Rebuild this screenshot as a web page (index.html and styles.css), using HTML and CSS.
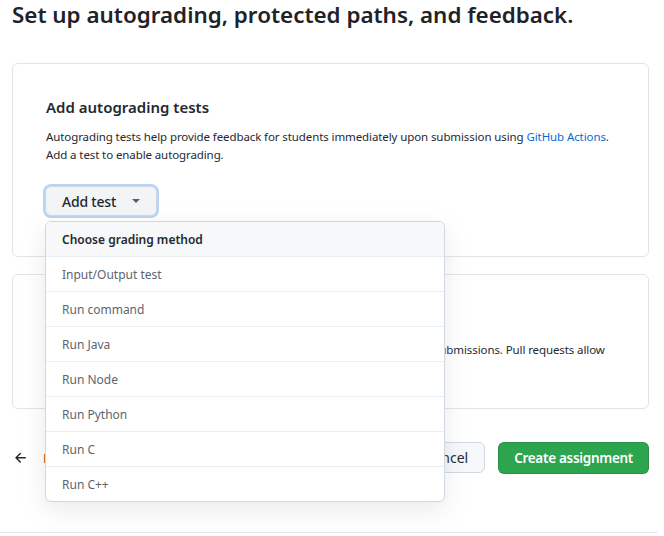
FILE: index.html
```html
<!DOCTYPE html>
<html lang="en">
<head>
<meta charset="utf-8">
<title>Autograding</title>
<link rel="stylesheet" href="styles.css">
</head>
<body>
<main class="page">
  <h1 class="page-title">Set up autograding, protected paths, and feedback.</h1>

  <section class="card">
    <h2 class="card-title">Add autograding tests</h2>
    <p class="card-desc">Autograding tests help provide feedback for students immediately upon submission using <a href="#" class="link">GitHub Actions</a>.<br>Add a test to enable autograding.</p>
    <div class="dropdown">
      <button class="btn-add" type="button">Add test <span class="caret"></span></button>
      <div class="menu">
        <div class="menu-header">Choose grading method</div>
        <div class="menu-item">Input/Output test</div>
        <div class="menu-item">Run command</div>
        <div class="menu-item">Run Java</div>
        <div class="menu-item">Run Node</div>
        <div class="menu-item">Run Python</div>
        <div class="menu-item">Run C</div>
        <div class="menu-item">Run C++</div>
      </div>
    </div>
  </section>

  <section class="card card-second">
    <h2 class="card-title">Protected file paths</h2>
    <p class="card-desc">Protect files from being modified by students in all their own assignment submissions. Pull requests allow<br>you to view changes.</p>
  </section>

  <footer class="actions">
    <a href="#" class="back">
      <svg class="back-icon" viewBox="0 0 16 16" width="16" height="16"><path d="M7.78 12.53a.75.75 0 0 1-1.06 0L2.470 8.28a.75.75 0 0 1 0-1.06l4.25-4.25a.751.751 0 0 1 1.042.018.751.751 0 0 1 .018 1.042L4.81 7h7.44a.75.75 0 0 1 0 1.5H4.81l2.97 2.97a.75.75 0 0 1 0 1.060Z" fill="#24292f"/></svg>
      <span class="back-text">Back</span>
    </a>
    <div class="action-buttons">
      <button class="btn-cancel" type="button">Cancel</button>
      <button class="btn-primary" type="button">Create assignment</button>
    </div>
  </footer>
  <div class="rule"></div>
</main>
</body>
</html>
```

FILE: styles.css
```css
* { box-sizing: border-box; }
html, body { margin: 0; padding: 0; background: #ffffff; }
body {
  font-family: "Noto Sans", "Segoe UI", "Liberation Sans", sans-serif;
  color: #24292f;
}
.page {
  padding: 0 15px 0 12px;
}
.page-title {
  margin: 0;
  padding-top: 0;
  font-size: 22.4px;
  line-height: 30px;
  font-weight: 600;
  color: #1f2328;
}
.card {
  margin-top: 33px;
  border: 1px solid #e1e4e8;
  border-radius: 6px;
  padding: 31px 33px 40px 33px;
}
.card-second {
  margin-top: 17px;
  padding-bottom: 32px;
  height: 135px;
}
.card-title {
  margin: 0;
  font-size: 15px;
  line-height: 24px;
  font-weight: 600;
  color: #24292f;
}
.card-desc {
  margin: 9px 0 0 0;
  font-size: 11.5px;
  letter-spacing: -0.1px;
  line-height: 18px;
  color: #24292f;
}
.card-second .card-desc { margin-top: 11px; }
.link { color: #0969da; text-decoration: none; }
.dropdown {
  position: relative;
  margin-top: 22px;
}
.btn-add {
  display: inline-flex;
  align-items: center;
  gap: 16px;
  height: 30px;
  padding: 0 16px 0 16px;
  margin-left: -1px;
  font-family: inherit;
  font-size: 14px;
  font-weight: 500;
  letter-spacing: -0.2px;
  color: #24292f;
  background: #f3f4f6;
  border: 1px solid #d0d7de;
  border-radius: 6px;
  box-shadow: 0 0 0 2px #b6d4f6;
}
.caret {
  width: 0;
  height: 0;
  border-left: 4px solid transparent;
  border-right: 4px solid transparent;
  border-top: 4px solid #57606a;
}
.menu {
  position: absolute;
  top: 35px;
  left: -1px;
  width: 400px;
  background: #ffffff;
  border: 1px solid #d0d7de;
  border-radius: 6px;
  box-shadow: 0 8px 24px rgba(140, 149, 159, 0.2);
  overflow: hidden;
  z-index: 10;
}
.menu-header {
  height: 34px;
  display: flex;
  align-items: center;
  padding-left: 16px;
  background: #f6f8fa;
  font-size: 12px;
  font-weight: 600;
  color: #24292f;
}
.menu-item {
  height: 35px;
  display: flex;
  align-items: center;
  padding-left: 16px;
  border-top: 1px solid #eaeef2;
  font-size: 12px;
  color: #5c6570;
}
.actions {
  margin-top: 33px;
  display: flex;
  align-items: center;
  justify-content: space-between;
}
.back {
  display: flex;
  align-items: center;
  gap: 14px;
  text-decoration: none;
  padding-left: 0;
}
.back-icon { margin-left: 1px; }
.back-text {
  font-size: 12px;
  color: #bc4c00;
}
.action-buttons {
  display: flex;
  gap: 13px;
}
.btn-cancel {
  height: 31px;
  padding: 0 16px;
  font-family: inherit;
  font-size: 14px;
  color: #24292f;
  background: #f6f8fa;
  border: 1px solid #d0d7de;
  border-radius: 6px;
}
.btn-primary {
  height: 32px;
  padding: 0 15px;
  font-family: inherit;
  font-size: 13.5px;
  letter-spacing: -0.3px;
  font-weight: 600;
  color: #ffffff;
  background: #2da44e;
  border: 1px solid rgba(27, 31, 36, 0.15);
  border-radius: 6px;
}
.rule {
  margin: 58px -15px 0 -12px;
  border-top: 1px solid #e6e8eb;
  width: 658px;
}
```
